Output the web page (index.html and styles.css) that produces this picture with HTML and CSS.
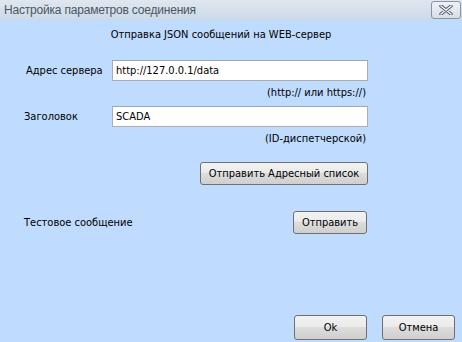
FILE: index.html
```html
<!DOCTYPE html>
<html lang="ru">
<head>
    <meta charset="UTF-8">
    <title>Настройка параметров соединения</title>
    <link rel="stylesheet" href="styles.css">
</head>
<body>
    <div class="dialog">
        <div class="titlebar">
            <span class="title">Настройка параметров соединения</span>
            <button class="close-btn" title="Закрыть">
                <svg width="14" height="10" viewBox="0 0 14 10">
                    <path d="M2 1 L12 9 M12 1 L2 9" stroke="#4f5b69" stroke-width="3.4" stroke-linecap="round"/>
                    <path d="M2 1 L12 9 M12 1 L2 9" stroke="#f4f6f8" stroke-width="1.6" stroke-linecap="round"/>
                </svg>
            </button>
        </div>

        <div class="content">
            <div class="heading">Отправка JSON сообщений на WEB-сервер</div>

            <div class="form-row first">
                <label class="server-label">Адрес сервера</label>
                <input type="text" value="http://127.0.0.1/data">
            </div>
            <div class="hint">(http:// или https://)</div>

            <div class="form-row">
                <label>Заголовок</label>
                <input type="text" value="SCADA">
            </div>
            <div class="hint">(ID-диспетчерской)</div>

            <div class="actions">
                <button class="btn btn-wide">Отправить Адресный список</button>
            </div>

            <div class="test-row">
                <span>Тестовое сообщение</span>
                <button class="btn">Отправить</button>
            </div>

            <div class="footer">
                <button class="btn">Ok</button>
                <button class="btn">Отмена</button>
            </div>
        </div>
    </div>
</body>
</html>
```

FILE: styles.css
```css
html, body { margin: 0; padding: 0; }
body { font-family: "DejaVu Sans Condensed", "Liberation Sans", sans-serif; font-size: 11px; color: #000; }

.dialog { width: 462px; height: 342px; display: flex; flex-direction: column; background: #bfdbfe; }

.titlebar {
    height: 20px; display: flex; align-items: center; justify-content: space-between;
    background: linear-gradient(#dfe7f0, #ccd9e7); padding: 0 1px 0 4px;
}
.title { font-family: "Liberation Sans", sans-serif; font-size: 12px; letter-spacing: -0.2px; color: #4a5663; }
.close-btn {
    width: 30px; height: 18px; margin-top: -1px; padding: 0; display: flex; align-items: center; justify-content: center;
    border: 1px solid #8795a6; border-radius: 3px; background: linear-gradient(#eef2f6, #d6dee8);
}

.content { flex: 1; display: flex; flex-direction: column; padding: 8px 94px 0 24px; }
.heading { text-align: center; line-height: 14px; padding-left: 50px; }

.form-row { display: flex; align-items: center; margin-top: 6px; }
.form-row.first { margin-top: 18px; }
.form-row label { width: 88px; }
.form-row .server-label { width: 86px; padding-left: 2px; }
.form-row input {
    flex: 1; height: 21px; box-sizing: border-box; border: 1px solid #abadb3; border-top-color: #a0a4ad;
    padding: 0 3px; font-family: "DejaVu Sans Condensed", "Liberation Sans", sans-serif; font-size: 11px; background: #fff;
}

.hint { text-align: right; line-height: 14px; margin-top: 5px; padding-right: 2px; }

.btn {
    height: 23px; padding: 0 6px; white-space: nowrap;
    font-family: "DejaVu Sans Condensed", "Liberation Sans", sans-serif; font-size: 11px; color: #000;
    border: 1px solid #707070; border-radius: 3px;
    background: linear-gradient(#f2f2f2 0%, #ebebeb 45%, #dddddd 50%, #cfcfcf 100%);
}
.actions { display: flex; justify-content: flex-end; margin-top: 16px; }
.btn-wide { width: 168px; }

.test-row { display: flex; align-items: center; justify-content: space-between; margin-top: 26px; padding-right: 1px; }
.test-row .btn { width: 74px; }

.footer { margin: auto -87px 2px 0; display: flex; justify-content: flex-end; gap: 15px; }
.footer .btn { width: 73px; height: 25px; }
```
